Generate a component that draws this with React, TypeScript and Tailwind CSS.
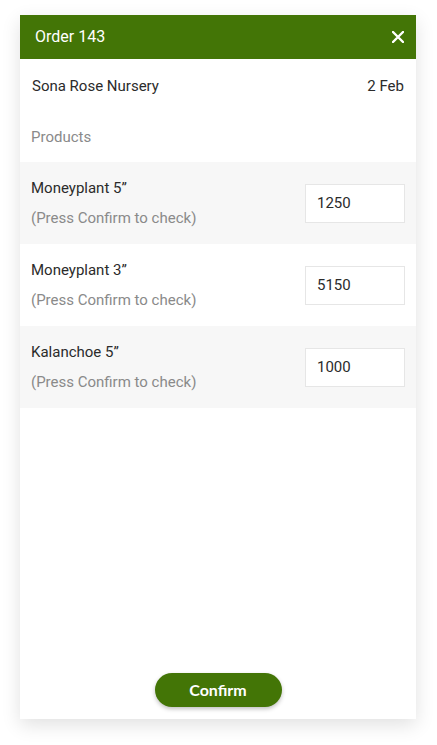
import React from 'react';

const products = [
  { name: 'Moneyplant 5\u201D', qty: '1250', shaded: true },
  { name: 'Moneyplant 3\u201D', qty: '5150', shaded: false },
  { name: 'Kalanchoe 5\u201D', qty: '1000', shaded: true },
];

export default function App() {
  return (
    <div className="w-[437px] h-[745px] bg-white pt-[15px] px-[20px] font-['Roboto',sans-serif]">
      <div className="flex flex-col h-[704px] w-[396px] bg-white shadow-[0_6px_18px_rgba(0,0,0,0.12)]">
        {/* header */}
        <div className="flex items-center justify-between h-[44px] bg-[#437506] pl-[15px] pr-[12px]">
          <span className="text-white text-[16px]">Order 143</span>
          <svg width="12" height="12" viewBox="0 0 12 12">
            <path d="M1 1 L11 11 M11 1 L1 11" stroke="white" strokeWidth="2.4" strokeLinecap="round" />
          </svg>
        </div>

        <div className="flex items-center justify-between h-[54px] px-[12px] text-[15px] text-[#2b2b2b]">
          <span>Sona Rose Nursery</span>
          <span>2 Feb</span>
        </div>

        <div className="flex items-center h-[49px] px-[11px] text-[15px] text-[#8a8a8a]">Products</div>

        {products.map((p) => (
          <div
            key={p.name}
            className={`flex items-center justify-between h-[82px] pl-[11px] pr-[11px] ${p.shaded ? 'bg-[#f7f7f7]' : 'bg-white'}`}
          >
            <div className="flex flex-col gap-[8px]">
              <span className="text-[15px] leading-[22px] text-[#2b2b2b]">{p.name}</span>
              <span className="text-[15px] leading-[22px] text-[#8a8a8a]">(Press Confirm to check)</span>
            </div>
            <div className="flex items-center w-[100px] h-[39px] bg-white border border-[#e6e6e6] pl-[11px] text-[15px] text-[#2b2b2b]">
              {p.qty}
            </div>
          </div>
        ))}

        <div className="flex-1" />

        <div className="flex justify-center pb-[12px]">
          <button className="w-[127px] h-[34px] rounded-full bg-[#437506] text-white text-[16px] font-bold font-['Lato',sans-serif] shadow-[0_2px_4px_rgba(0,0,0,0.25)]">
            Confirm
          </button>
        </div>
      </div>
    </div>
  );
}
